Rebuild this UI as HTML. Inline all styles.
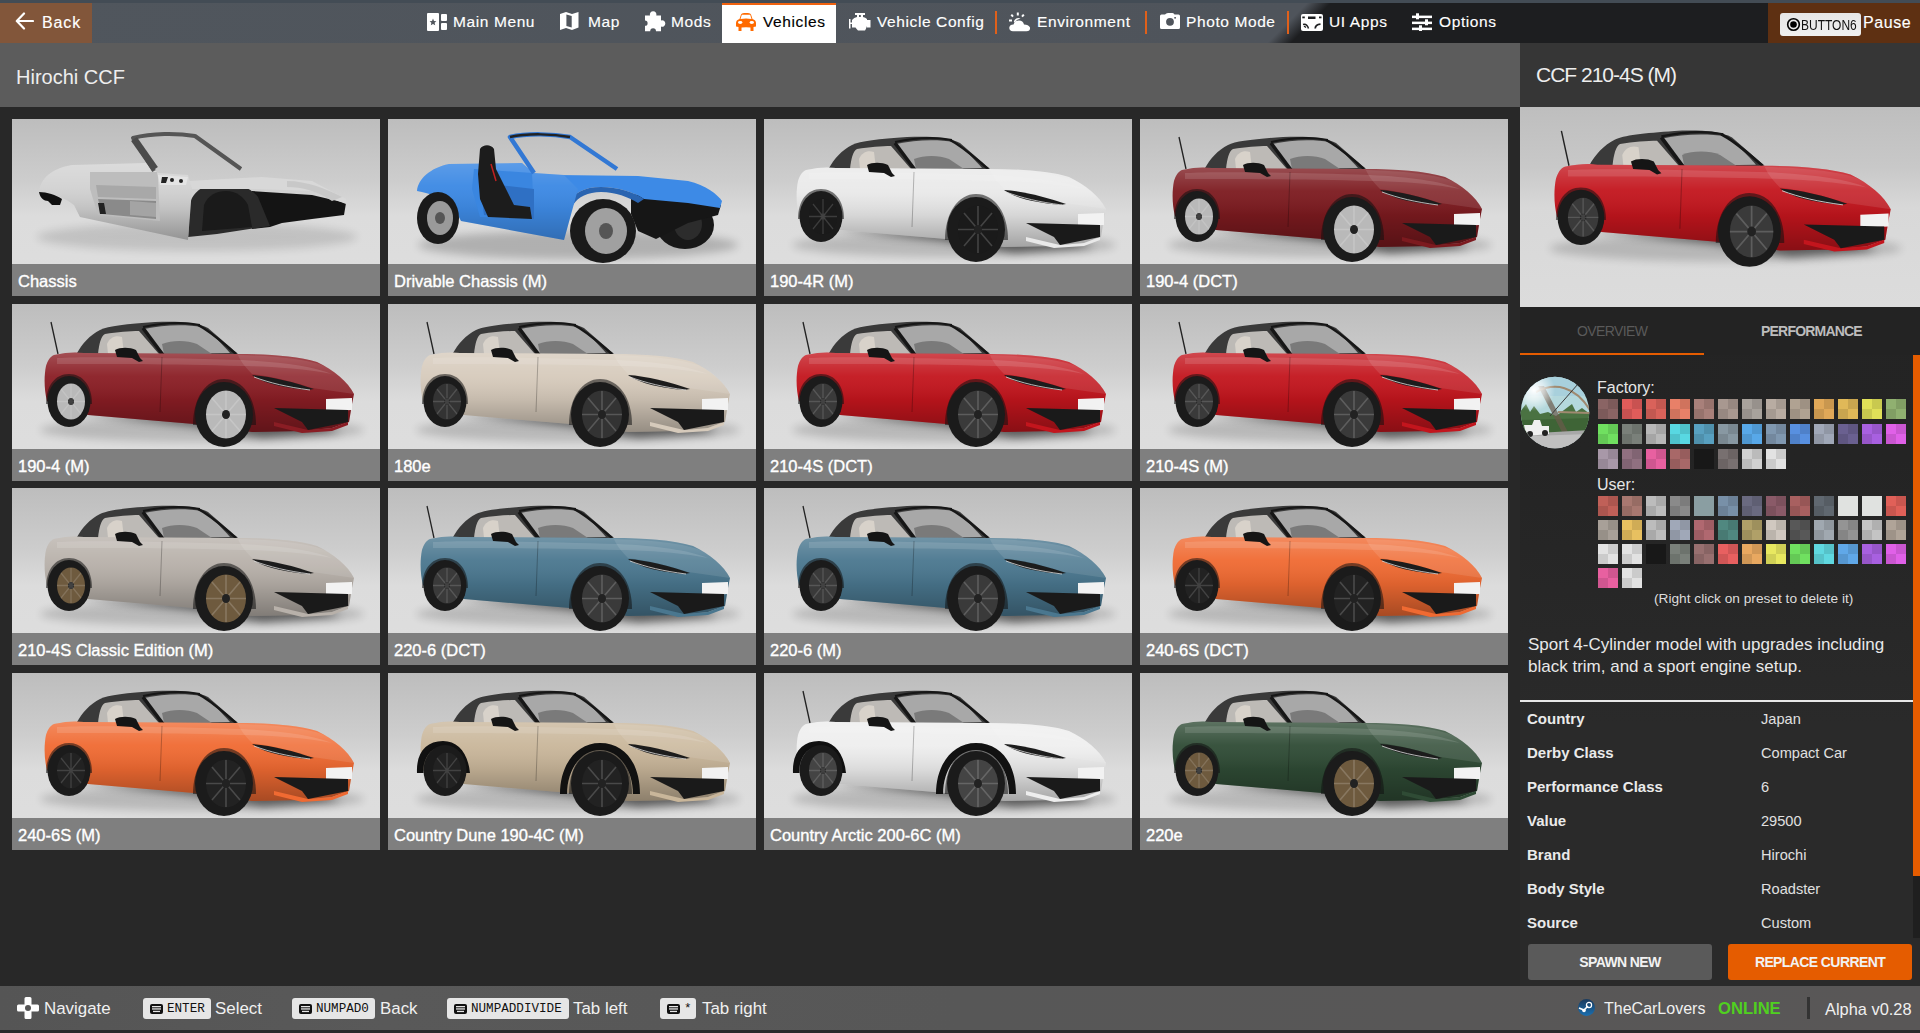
<!DOCTYPE html>
<html><head><meta charset="utf-8">
<style>
*{margin:0;padding:0;box-sizing:border-box}
html,body{width:1920px;height:1033px;overflow:hidden;background:#2a2a2a;font-family:"Liberation Sans",sans-serif;color:#fff}
.a{position:absolute}
#strip{left:0;top:0;width:1920px;height:3px;background:#434c55}
#nav{left:0;top:3px;width:1920px;height:40px;background:linear-gradient(135deg,#50565d 0%,#4f545b 66.7%,#1d1e20 67.9%,#1d1e20 100%)}
#back{left:0;top:3px;width:92px;height:40px;background:#82563a}
.nt{font-size:15.5px;letter-spacing:0.6px;color:#fff;top:13.5px;line-height:16px;white-space:nowrap;-webkit-text-stroke:0.15px currentColor}
.sep{width:2px;height:23px;top:11px;background:#e0601a}
#veh{left:722px;top:3px;width:114px;height:40px;background:#fff;border-top:2px solid #f06210}
#pause{left:1768px;top:3px;width:152px;height:40px;background:#5e3012}
#titleL{left:0;top:43px;width:1520px;height:64px;background:#5c5c5c}
#titleR{left:1520px;top:43px;width:400px;height:64px;background:#363636}
#grid{left:0;top:107px;width:1520px;height:879px;background:#282828}
.card{width:368px;height:177px;overflow:hidden;background:linear-gradient(180deg,#bdbdbd 0%,#cdcdcd 35%,#dcdcdc 55%,#dedede 100%)}
.card svg{position:absolute;left:0;top:0;width:368px;height:145px}
.lbl{position:absolute;left:0;top:145px;width:368px;height:32px;background:rgba(40,40,40,0.52);font-size:16.5px;line-height:35px;padding-left:6px;color:#fff;white-space:nowrap;-webkit-text-stroke:0.35px #fff}
#pimg{left:1520px;top:107px;width:400px;height:200px;overflow:hidden;background:linear-gradient(180deg,#bebebe 0%,#c8c8c8 30%,#d8d8d8 50%,#dcdcdc 100%)}
#panel{left:1520px;top:107px;width:400px;height:879px;background:linear-gradient(180deg,#232323 0%,#242424 40%,#2a2a2a 70%,#2a2a2a 100%)}
#avatar{left:1520px;top:377px;width:70px;height:72px;border-radius:50%;background:radial-gradient(circle at 35% 30%,#f4f4f4 0%,#c8d4d8 18%,#8aa0a0 35%,#5a7058 55%,#8a8a88 72%,#c8c8c8 100%)}
.sw{position:absolute;width:20px;height:20px}
.tl{position:absolute;left:1527px;font-size:15px;font-weight:bold;color:#eaeaea;line-height:20px}
.tv{position:absolute;left:1761px;font-size:14.6px;color:#e0e0e0;line-height:20px}
.btn{top:944px;width:184px;height:36px;border-radius:3px;font-size:14px;letter-spacing:-0.6px;font-weight:bold;color:#f2f2f2;text-align:center;line-height:36px}
#bottom{left:0;top:986px;width:1920px;height:44px;background:linear-gradient(90deg,#555 0%,#595959 20%,#575757 50%,#595757 100%)}
.bt{top:999px;font-size:16.9px;color:#f0f0f0;line-height:20px;white-space:nowrap}
.kb{top:998px;height:21px;background:#e6e6e6;border-radius:3px}
.kb span{position:absolute;top:3px;font-family:"Liberation Mono",monospace;font-size:12.6px;line-height:17px;color:#111}
</style></head><body>
<svg width="0" height="0" style="position:absolute"><defs>
<linearGradient id="bodyshade" x1="0" y1="0" x2="0" y2="1">
 <stop offset="0" stop-color="#fff" stop-opacity="0.22"/>
 <stop offset="0.3" stop-color="#fff" stop-opacity="0.05"/>
 <stop offset="0.6" stop-color="#000" stop-opacity="0.08"/>
 <stop offset="1" stop-color="#000" stop-opacity="0.3"/>
</linearGradient>
<filter id="blur4" x="-20%" y="-50%" width="140%" height="200%"><feGaussianBlur stdDeviation="4"/></filter>
<filter id="blur2"><feGaussianBlur stdDeviation="1.5"/></filter>
</defs>
<symbol id="car" viewBox="0 0 368 145">
 <ellipse cx="190" cy="126" rx="162" ry="12" fill="#000" opacity="0.16" filter="url(#blur4)"/>
 <path d="M60,110 L180,122 L250,134 L330,128 L300,118 L180,112 Z" fill="#000" opacity="0.5" filter="url(#blur4)"/>
 <path d="M39,18 L46,50" stroke="#222" stroke-width="1.3" fill="none" style="display:var(--ant,inline)"/>
 <path d="M65,49 C70,40 78,31 88,26 C96,22 115,20 143,18 C165,17 185,18 196,24 L226,50 L150,53 Z" fill="#3a3a3a"/>
 <path d="M86,50 C87,40 89,32 93,30 C105,28 118,27 127,27 L147,50 Z" fill="#bdbab6"/>
 <path d="M95,40 C98,33 104,31 110,33 L112,50 L96,50 Z" fill="#d8d2ca"/>
 <path d="M132,25 C150,21 172,20 190,23 C201,30 210,40 218,49 L152,50 Z" fill="#a8a8a8"/>
 <path d="M150,40 C160,36 175,36 185,40 L200,50 L152,50 Z" fill="#7a7a7a"/>
 <path d="M131,24 L151,51" stroke="#161616" stroke-width="3.5"/>
 <path d="M186,21 C200,28 212,40 224,50" stroke="#161616" stroke-width="2.5" fill="none"/>
 <path d="M131,23 C150,19 172,18 188,21" stroke="#161616" stroke-width="2" fill="none"/>
 <path d="M42,51 C55,48 65,48 72,49 L225,50 C255,50 285,52 305,58 C322,66 336,78 342,90 L340,100 L337,118 L320,124 L290,127 L240,128 L182,120 L76,111 L48,104 L35,97 C32,85 32,72 34,62 C36,56 38,53 42,51 Z" style="fill:var(--body)"/>
 <path d="M42,51 C55,48 65,48 72,49 L225,50 C255,50 285,52 305,58 C322,66 336,78 342,90 L340,100 L337,118 L320,124 L290,127 L240,128 L182,120 L76,111 L48,104 L35,97 C32,85 32,72 34,62 C36,56 38,53 42,51 Z" fill="url(#bodyshade)"/>
 <path d="M45,54 C80,52 160,54 230,56 C270,58 300,62 320,70 C290,64 250,62 230,62 C160,60 90,60 45,60 Z" fill="#fff" opacity="0.12"/>
 <path d="M226,51 C262,52 292,55 310,61 C326,68 337,80 342,90 L300,84 C282,78 258,72 240,70 C232,62 228,56 226,51 Z" fill="#fff" opacity="0.1"/>
 <path d="M262,118 L296,126 L320,124 L336,118 L336,121 L320,127 L290,129 L262,122 Z" style="fill:var(--body)"/>
 <path d="M150,53 L148,108" stroke="#000" stroke-opacity="0.25" stroke-width="1"/>
 <path d="M103,46 C108,43 118,43 124,46 L128,54 L131,57 L127,58 L120,54 L105,53 Z" fill="#151515"/>
 <path d="M240,71 C258,72 282,78 302,85 L296,86 C275,84 252,80 240,71 Z" fill="#1c1c1c"/>
 <path d="M242,73 C258,79 275,83 298,86" stroke="#ddd" stroke-width="0.8" fill="none"/>
 <path d="M314,95 L340,94 L340,106 L314,107 Z" fill="#f2f2f2"/>
 <path d="M262,104 L336,106 L336,118 L296,126 L290,118 Z" fill="#1a1a1a"/>
 <path d="M29,100 C28,80 38,68 55,68 C70,68 80,80 82,100 L76,100 C74,84 66,74 55,74 C42,74 35,86 35,100 Z" fill="#111" style="display:var(--flare,none)"/>
 <path d="M172,121 C172,92 188,70 212,70 C238,70 252,92 252,121 L245,121 C245,98 232,77 212,77 C192,77 179,98 179,121 Z" fill="#111" style="display:var(--flare,none)"/>
 <path d="M34,100 C34,82 43,70 57,70 C71,70 80,82 80,100 Z" fill="#111" opacity="0.55"/>
 <ellipse cx="57" cy="97.5" rx="21.5" ry="25.5" fill="#1b1b1b"/>
 <ellipse cx="59" cy="97.5" rx="14" ry="18" style="fill:var(--rim)"/>
 <ellipse cx="59" cy="97.5" rx="3" ry="3.5" fill="#222"/>
 <path d="M181,121 C181,94 194,75 212,75 C231,75 244,94 244,121 Z" fill="#111" opacity="0.55"/>
 <ellipse cx="212" cy="110.5" rx="29" ry="32.5" fill="#1b1b1b"/>
 <ellipse cx="214" cy="110.5" rx="20" ry="24" style="fill:var(--rim)"/>
 <path d="M214,87 L214,134 M194,110.5 L234,110.5 M200,94 L228,127 M228,94 L200,127" stroke="#fff" stroke-opacity="0.18" stroke-width="1.6"/>
 <path d="M59,80 L59,115 M45,97.5 L73,97.5 M49,85 L69,110 M69,85 L49,110" stroke="#fff" stroke-opacity="0.15" stroke-width="1.3"/>
 <ellipse cx="214" cy="110.5" rx="4" ry="4.5" fill="#222"/>
</symbol>

<symbol id="chassis" viewBox="0 0 368 145">
 <ellipse cx="185" cy="118" rx="160" ry="14" fill="#000" opacity="0.12" filter="url(#blur4)"/>
 <!-- black front structure -->
 <path d="M240,72 L300,76 L334,84 L332,96 L300,100 L270,104 L258,108 L240,110 Z" fill="#141414"/>
 <path d="M176,118 L178,84 C182,70 196,64 212,64 C228,64 240,70 246,78 L258,107 L205,115 Z" fill="#2a2a2a"/>
 <path d="M190,112 L192,86 C196,76 205,72 214,72 C224,72 232,78 236,86 L240,108 Z" fill="#1a1a1a"/>
 <!-- silver front struts -->
 <path d="M176,62 L250,58 L300,62 L334,80 L334,85 L300,72 L245,70 L180,70 Z" fill="#d8d8d8"/>
 <path d="M275,62 C295,62 315,70 330,78 L320,82 C305,72 290,68 275,68 Z" fill="#c8c8c8"/>
 <!-- rear body silver -->
 <path d="M27,73 C28,60 40,49 60,46 L134,44 L146,54 L176,56 L180,70 L176,121 L68,98 L62,86 C52,78 40,74 27,73 Z" fill="#d2d2d2"/>
 <path d="M27,73 C28,60 40,49 60,46 L134,44 L146,54 L176,56 L180,70 L176,121 L68,98 L62,86 C52,78 40,74 27,73 Z" fill="url(#bodyshade)"/>
 <!-- interior -->
 <path d="M78,53 L145,53 L146,58 L148,102 L86,96 L78,70 Z" fill="#bdbdbd"/>
 <path d="M84,66 L144,68 L144,80 L86,78 Z" fill="#a8a8a8"/>
 <path d="M86,80 L144,82 L144,100 L90,95 Z" fill="#8a8a8a"/>
 <path d="M118,82 L144,84 L144,98 L118,96 Z" fill="#a4a4a4"/>
 <path d="M86,84 L92,84 L94,95 L88,95 Z" fill="#222"/>
 <!-- rear arch -->
 <path d="M27,73 C28,79 32,82 36,82 L40,86 L48,86 L50,80 C44,76 35,73 27,73 Z" fill="#101010"/>
 <!-- pillar block -->
 <path d="M146,56 L176,58 L174,66 L148,66 Z" fill="#e4e4e4"/>
 <circle cx="160" cy="61" r="2" fill="#222"/><circle cx="169" cy="62" r="2" fill="#222"/><path d="M150,58 L156,58 L154,64 L149,64 Z" fill="#222"/>
 <!-- windshield frame -->
 <path d="M142,52 L121,19 C140,14 165,14 183,17 L229,50" stroke="#555" stroke-width="4" fill="none" stroke-linejoin="round"/>
 <path d="M143,50 L122,20" stroke="#4a4a4a" stroke-width="7" fill="none"/>
</symbol>
<symbol id="dchassis" viewBox="0 0 368 145">
 <ellipse cx="190" cy="126" rx="160" ry="14" fill="#000" opacity="0.2" filter="url(#blur4)"/>
 <!-- far front wheel -->
 <ellipse cx="297" cy="106" rx="29" ry="24" fill="#181818"/>
 <ellipse cx="300" cy="105" rx="14" ry="16" fill="#2c2c2c"/>
 <!-- black engine/suspension -->
 <path d="M243,75 L333,86 L330,96 L300,104 L268,120 L250,112 L243,95 Z" fill="#161616"/>
 <!-- blue front arch -->
 <path d="M170,56 L250,57 L300,62 C318,66 330,76 334,82 L332,89 L300,84 L256,80 C246,73 230,68 213,68 C196,68 186,74 181,84 L176,100 Z" fill="#3d8ae6"/>
 <path d="M256,80 C246,73 230,68 213,68 C196,68 186,74 181,84 L185,86 C190,78 200,73 213,73 C228,73 240,78 250,84 Z" fill="#2a64b0"/>
 <!-- rear body blue -->
 <path d="M29,72 C30,60 42,49 61,45 L134,44 L146,54 L176,56 L190,70 L176,121 L73,102 L66,88 C56,80 42,74 29,72 Z" fill="#3e8ae4"/>
 <path d="M29,72 C30,60 42,49 61,45 L134,44 L146,54 L176,56 L190,70 L176,121 L73,102 L66,88 C56,80 42,74 29,72 Z" fill="url(#bodyshade)" opacity="0.7"/>
 <!-- door opening -->
 <path d="M86,50 L144,54 L146,100 L92,98 L84,70 Z" fill="#3a86e0"/>
 <path d="M92,64 L146,70 L146,100 L96,96 Z" fill="#2f70c4"/>
 <!-- seat -->
 <path d="M92,30 C95,25 103,25 106,30 L108,50 L118,70 L126,86 L142,88 L144,100 L100,98 L92,80 L90,55 Z" fill="#1c1c1c"/>
 <path d="M103,45 L108,62" stroke="#c02020" stroke-width="1.5"/>
 <!-- windshield frame -->
 <path d="M146,54 L122,18 C140,14 165,15 182,18 L229,50" stroke="#3278d4" stroke-width="4.5" fill="none" stroke-linejoin="round"/>
 <path d="M122,18 C140,14 165,15 182,18" stroke="#222" stroke-width="2.5" fill="none"/>
 <!-- rear wheel -->
 <ellipse cx="50" cy="99" rx="21" ry="26" fill="#1a1a1a"/>
 <ellipse cx="52" cy="99" rx="13" ry="17" fill="#9a9a9a"/>
 <ellipse cx="52" cy="99" rx="5" ry="6" fill="#555"/>
 <!-- front wheel -->
 <ellipse cx="215" cy="112" rx="33" ry="32" fill="#1a1a1a"/>
 <ellipse cx="218" cy="112" rx="21" ry="23" fill="#a0a0a0"/>
 <ellipse cx="218" cy="112" rx="7" ry="8" fill="#555"/>
</symbol>
</svg>
<div class="a" id="strip"></div>
<div class="a" id="nav"></div>
<div class="a" id="back"></div>
<svg class="a" style="left:15px;top:12px" width="19" height="18" viewBox="0 0 19 18"><path d="M9,1.5 L1.8,9 L9,16.5 M2,9 L18,9" stroke="#fff" stroke-width="2.2" fill="none" stroke-linecap="round" stroke-linejoin="round"/></svg>
<div class="a nt" style="left:42px;font-size:16px;letter-spacing:0.9px;top:15px">Back</div>
<div class="a" id="veh"></div>
<svg class="a" style="left:427px;top:13px" width="20" height="18" viewBox="0 0 20 18"><rect x="0" y="0" width="12" height="18" rx="1" fill="#fff"/><rect x="14" y="1" width="6" height="7" rx="1" fill="#fff"/><rect x="14" y="10" width="6" height="7" rx="1" fill="#fff"/><path d="M6,5.6 L7,8 L9.4,8.2 L7.6,9.8 L8.2,12.2 L6,10.9 L3.8,12.2 L4.4,9.8 L2.6,8.2 L5,8 Z" fill="#50555c"/></svg>
<div class="a nt" style="left:453px">Main Menu</div>
<svg class="a" style="left:560px;top:12px" width="19" height="18" viewBox="0 0 19 18"><path d="M0,2 L6,0 L12,2 L18.5,0 L18.5,15.5 L12,18 L6,16 L0,18 Z" fill="#fff"/><path d="M6.4,2.4 L11.7,4 L11.7,15.5 L6.4,13.9 Z" fill="#50555c"/></svg>
<div class="a nt" style="left:588px">Map</div>
<svg class="a" style="left:645px;top:11px" width="21" height="21" viewBox="0 0 21 21"><path d="M0,4.5 L5,4.5 A3.3,3.3 0 1 1 11.3,4.5 L16,4.5 L16,9.5 A3.2,3.2 0 1 1 16,15.5 L16,20.2 L11,20.2 A2.8,2.8 0 0 0 5.2,20.2 L0,20.2 L0,14.8 A2.6,2.6 0 0 0 0,9.6 Z" fill="#fff"/></svg>
<div class="a nt" style="left:671px">Mods</div>
<svg class="a" style="left:736px;top:13px" width="20" height="18" viewBox="0 0 20 18"><path d="M5,1.5 Q5.5,0 8,0 L12,0 Q14.5,0 15,1.5 L16.5,6 Q20,7 20,10 L20,13.5 L17.5,14 L17.5,18 L14.5,18 L14.5,14.5 Q10,14 5.5,14.5 L5.5,18 L2.5,18 L2.5,14 L0,13.5 L0,10 Q0,7 3.5,6 Z" fill="#ff6a00"/><path d="M5.8,1.8 L14.2,1.8 L15.5,6 Q10,5 4.5,6 Z" fill="#fff"/><ellipse cx="4.2" cy="9.5" rx="2.2" ry="1.4" fill="#fff"/><ellipse cx="15.8" cy="9.5" rx="2.2" ry="1.4" fill="#fff"/></svg>
<div class="a nt" style="left:763px;color:#000">Vehicles</div>
<svg class="a" style="left:849px;top:13px" width="22" height="18" viewBox="0 0 22 18"><path d="M6,0 L16,0 L16,2 L14,2 L14,4 Q16.5,4.5 18,6 L18,7 L21.5,7 L21.5,14.5 L18,14.5 L18,13 Q17,16 16,17.5 L9,17.5 Q7.5,16 6.5,14.5 L3,14.5 L3,11 L1.5,11 L1.5,15.5 L0,15.5 L0,6 L1.5,6 L1.5,9.5 L3,9.5 L3,7 Q5,4.5 8,4 L8,2 L6,2 Z" fill="#fff"/><rect x="10" y="2" width="1.8" height="2" fill="#50555c"/></svg>
<div class="a nt" style="left:877px">Vehicle Config</div>
<div class="a sep" style="left:995px"></div>
<svg class="a" style="left:1009px;top:12px" width="22" height="20" viewBox="0 0 22 20"><rect x="7.8" y="0.5" width="2" height="3" fill="#fff"/><path d="M2.3,2.7 L4,4.6" stroke="#fff" stroke-width="2"/><path d="M14.8,2.6 L13,4.7" stroke="#fff" stroke-width="2"/><rect x="0" y="7.5" width="3" height="2" fill="#fff"/><path d="M4.8,10 A4.4,4.4 0 0 1 11.5,6.7 Q7,7.5 6,10.5 Z" fill="#fff"/><path d="M4,19.2 Q0,19 0.3,15.5 Q0.8,12.5 4.6,12.6 Q5.5,8.5 10,8.5 Q14,8.6 15,12.5 Q19.5,12.6 21,15.5 Q21.5,19.2 17.5,19.2 Z" fill="#fff"/></svg>
<div class="a nt" style="left:1037px">Environment</div>
<div class="a sep" style="left:1145px"></div>
<svg class="a" style="left:1160px;top:13px" width="20" height="16" viewBox="0 0 20 16"><path d="M5,1.5 Q6,0 8,0 L12.5,0 Q14,0 14.5,1.5 L18.5,1.5 Q20,1.5 20,3 L20,14.5 Q20,16 18.5,16 L1.5,16 Q0,16 0,14.5 L0,3 Q0,1.5 1.5,1.5 Z" fill="#fff"/><circle cx="10" cy="8.8" r="3.9" fill="#50555c"/><rect x="14.3" y="4" width="1.6" height="1.6" fill="#50555c"/></svg>
<div class="a nt" style="left:1186px">Photo Mode</div>
<div class="a sep" style="left:1287px"></div>
<svg class="a" style="left:1301px;top:14px" width="22" height="17" viewBox="0 0 22 17"><rect x="0" y="0" width="22" height="17" rx="2" fill="#fff"/><rect x="1.3" y="2.5" width="2.5" height="1.8" fill="#1d1e20"/><rect x="7" y="2.5" width="7.5" height="2.5" fill="#1d1e20"/><rect x="18" y="2.5" width="2.5" height="1.8" fill="#1d1e20"/><path d="M2,10.5 Q6,9.5 7.5,14.5" stroke="#1d1e20" stroke-width="1.5" fill="none"/><path d="M3,12 L5,13.5" stroke="#1d1e20" stroke-width="1.3"/><path d="M14.2,14.5 Q14.5,10.5 19.5,10.2" stroke="#1d1e20" stroke-width="1.8" fill="none"/></svg>
<div class="a nt" style="left:1329px">UI Apps</div>
<svg class="a" style="left:1412px;top:13px" width="20" height="18" viewBox="0 0 20 18"><rect x="0" y="2.6" width="20" height="2.5" fill="#fff"/><rect x="0" y="8.6" width="20" height="2.5" fill="#fff"/><rect x="0" y="14.6" width="20" height="2.5" fill="#fff"/><rect x="4" y="0.3" width="3" height="6" fill="#fff"/><rect x="13" y="6.3" width="3" height="6" fill="#fff"/><rect x="7" y="12.3" width="3" height="5.7" fill="#fff"/></svg>
<div class="a nt" style="left:1439px">Options</div>
<div class="a" id="pause"></div>
<div class="a" style="left:1780px;top:13px;width:81px;height:23px;border-radius:3px;background:linear-gradient(180deg,#e6e6e6,#f0f0f0)"></div>
<svg class="a" style="left:1786px;top:17px" width="15" height="15" viewBox="0 0 15 15"><circle cx="7.5" cy="7.5" r="5.8" fill="none" stroke="#000" stroke-width="1.6"/><circle cx="7.5" cy="7.5" r="3.3" fill="#000"/></svg>
<div class="a" style="left:1801px;top:18px;font-size:12px;line-height:14px;color:#111;transform:scaleY(1.15);transform-origin:0 50%">BUTTON6</div>
<div class="a nt" style="left:1863px;font-size:16px;letter-spacing:0.6px;top:15px">Pause</div>

<div class="a" id="titleL"></div>
<div class="a" style="left:16px;top:65.5px;font-size:20px;line-height:23px;color:#eee">Hirochi CCF</div>
<div class="a" id="titleR"></div>
<div class="a" style="left:1536px;top:63px;font-size:21px;letter-spacing:-1px;line-height:24px;color:#eee">CCF 210-4S (M)</div>

<div class="a" id="grid"></div>
<div class="a card" style="left:12px;top:119px"><svg viewBox="0 0 368 145"><use href="#chassis"/></svg><div class="lbl">Chassis</div></div>
<div class="a card" style="left:388px;top:119px"><svg viewBox="0 0 368 145"><use href="#dchassis"/></svg><div class="lbl">Drivable Chassis (M)</div></div>
<div class="a card" style="left:764px;top:119px;--body:#e9e9e9;--rim:#1a1a1a;--ant:none"><svg viewBox="0 0 368 145"><use href="#car"/></svg><div class="lbl">190-4R (M)</div></div>
<div class="a card" style="left:1140px;top:119px;--body:#7c1a1f;--rim:#b9b9b9"><svg viewBox="0 0 368 145"><use href="#car"/></svg><div class="lbl">190-4 (DCT)</div></div>
<div class="a card" style="left:12px;top:304px;--body:#8a1d24;--rim:#b9b9b9"><svg viewBox="0 0 368 145"><use href="#car"/></svg><div class="lbl">190-4 (M)</div></div>
<div class="a card" style="left:388px;top:304px;--body:#d6cabb;--rim:#333"><svg viewBox="0 0 368 145"><use href="#car"/></svg><div class="lbl">180e</div></div>
<div class="a card" style="left:764px;top:304px;--body:#c3151d;--rim:#3a3a3a"><svg viewBox="0 0 368 145"><use href="#car"/></svg><div class="lbl">210-4S (DCT)</div></div>
<div class="a card" style="left:1140px;top:304px;--body:#c3151d;--rim:#3a3a3a"><svg viewBox="0 0 368 145"><use href="#car"/></svg><div class="lbl">210-4S (M)</div></div>
<div class="a card" style="left:12px;top:488px;--body:#b8b1aa;--rim:#6e5a3e;--ant:none"><svg viewBox="0 0 368 145"><use href="#car"/></svg><div class="lbl">210-4S Classic Edition (M)</div></div>
<div class="a card" style="left:388px;top:488px;--body:#4a778f;--rim:#3a3a3a"><svg viewBox="0 0 368 145"><use href="#car"/></svg><div class="lbl">220-6 (DCT)</div></div>
<div class="a card" style="left:764px;top:488px;--body:#4a778f;--rim:#3a3a3a"><svg viewBox="0 0 368 145"><use href="#car"/></svg><div class="lbl">220-6 (M)</div></div>
<div class="a card" style="left:1140px;top:488px;--body:#f06a32;--rim:#222;--ant:none"><svg viewBox="0 0 368 145"><use href="#car"/></svg><div class="lbl">240-6S (DCT)</div></div>
<div class="a card" style="left:12px;top:673px;--body:#f06a32;--rim:#222;--ant:none"><svg viewBox="0 0 368 145"><use href="#car"/></svg><div class="lbl">240-6S (M)</div></div>
<div class="a card" style="left:388px;top:673px;--body:#c9b69a;--rim:#222;--ant:none;--flare:inline"><svg viewBox="0 0 368 145"><use href="#car"/></svg><div class="lbl">Country Dune 190-4C (M)</div></div>
<div class="a card" style="left:764px;top:673px;--body:#eeeeee;--rim:#444;--flare:inline"><svg viewBox="0 0 368 145"><use href="#car"/></svg><div class="lbl">Country Arctic 200-6C (M)</div></div>
<div class="a card" style="left:1140px;top:673px;--body:#2f4b35;--rim:#6e5a3e;--ant:none"><svg viewBox="0 0 368 145"><use href="#car"/></svg><div class="lbl">220e</div></div>

<div class="a" id="panel"></div>
<div class="a" id="pimg"><svg width="400" height="200" viewBox="0 0 400 200"><use href="#car" x="0" y="0" width="368" height="145" transform="translate(-1,4.4) scale(1.087)" style="--body:#c3151d;--rim:#3a3a3a"/></svg></div>
<div class="a" style="left:1520px;top:307px;width:400px;height:48px;background:#232323"></div>
<div class="a" style="left:1577px;top:323px;font-size:14px;letter-spacing:-0.6px;color:#5a5a5a;line-height:17px">OVERVIEW</div>
<div class="a" style="left:1761px;top:323px;font-size:14px;letter-spacing:-0.8px;font-weight:bold;color:#bdbdbd;line-height:17px">PERFORMANCE</div>
<div class="a" style="left:1520px;top:353px;width:184px;height:2px;background:#e55c00"></div>
<div class="a" style="left:1913px;top:355px;width:7px;height:583px;background:#1f1f1f"></div>
<div class="a" style="left:1913px;top:355px;width:7px;height:521px;background:#e55c00"></div>
<svg class="a" style="left:1520px;top:376px" width="70" height="73" viewBox="0 0 70 73"><defs><clipPath id="avc"><ellipse cx="35" cy="36.5" rx="34.3" ry="35.8"/></clipPath><radialGradient id="sun" cx="0.3" cy="0.3" r="0.35"><stop offset="0" stop-color="#fff" stop-opacity="1"/><stop offset="0.5" stop-color="#fff" stop-opacity="0.6"/><stop offset="1" stop-color="#fff" stop-opacity="0"/></radialGradient></defs><g clip-path="url(#avc)"><rect x="0" y="0" width="70" height="73" fill="#b4d8dc"/><rect x="0" y="0" width="70" height="20" fill="#a8d0dc"/><path d="M0,36 L6,28 L10,36 L14,30 L20,38 L28,36 L36,40 L44,34 L52,28 L56,36 L62,32 L70,38 L70,60 L0,60 Z" fill="#4a7242"/><path d="M0,44 L70,42 L70,60 L0,60 Z" fill="#3e6436"/><path d="M18,10 L24,10 L50,60 L44,60 Z" fill="#6a5a4a" opacity="0.7"/><path d="M16,16 C35,6 55,10 70,34" stroke="#a08a70" stroke-width="2" fill="none"/><path d="M38,36 L70,37" stroke="#a08a70" stroke-width="2"/><path d="M30,40 L58,8" stroke="#3a3a3a" stroke-width="1"/><path d="M0,58 L70,54 L70,73 L0,73 Z" fill="#a8a8a8"/><path d="M10,60 L70,58 L70,73 L10,73 Z" fill="#c0c0c0"/><path d="M4,49 L12,49 L14,44 L20,44 L22,50 L29,50 L29,58 L6,60 Z" fill="#f0f0f0"/><circle cx="10" cy="58" r="3" fill="#222"/><circle cx="25" cy="57" r="3" fill="#222"/><circle cx="26" cy="26" r="30" fill="url(#sun)"/></g></svg>
<div class="a" style="left:1597px;top:377.5px;font-size:16px;color:#e6e6e6;line-height:20px">Factory:</div>
<div class="a" style="left:1597px;top:474.5px;font-size:16px;color:#e6e6e6;line-height:20px">User:</div>
<div class="sw" style="left:1598px;top:399px;background:conic-gradient(#7c5a5a 0 25%,#8a6464 0 50%,#7c5a5a 0 75%,#8a6464 0)"></div>
<div class="sw" style="left:1622px;top:399px;background:conic-gradient(#c95251 0 25%,#e05c5a 0 50%,#c95251 0 75%,#e05c5a 0)"></div>
<div class="sw" style="left:1646px;top:399px;background:conic-gradient(#c35851 0 25%,#d9625a 0 50%,#c35851 0 75%,#d9625a 0)"></div>
<div class="sw" style="left:1670px;top:399px;background:conic-gradient(#d0735d 0 25%,#e88068 0 50%,#d0735d 0 75%,#e88068 0)"></div>
<div class="sw" style="left:1694px;top:399px;background:conic-gradient(#97736d 0 25%,#a8807a 0 50%,#97736d 0 75%,#a8807a 0)"></div>
<div class="sw" style="left:1718px;top:399px;background:conic-gradient(#978881 0 25%,#a89890 0 50%,#978881 0 75%,#a89890 0)"></div>
<div class="sw" style="left:1742px;top:399px;background:conic-gradient(#97918c 0 25%,#a8a29c 0 50%,#97918c 0 75%,#a8a29c 0)"></div>
<div class="sw" style="left:1766px;top:399px;background:conic-gradient(#a59a91 0 25%,#b8aca2 0 50%,#a59a91 0 75%,#b8aca2 0)"></div>
<div class="sw" style="left:1790px;top:399px;background:conic-gradient(#9e9183 0 25%,#b0a292 0 50%,#9e9183 0 75%,#b0a292 0)"></div>
<div class="sw" style="left:1814px;top:399px;background:conic-gradient(#c9974f 0 25%,#e0a858 0 50%,#c9974f 0 75%,#e0a858 0)"></div>
<div class="sw" style="left:1838px;top:399px;background:conic-gradient(#c9a54f 0 25%,#e0b858 0 50%,#c9a54f 0 75%,#e0b858 0)"></div>
<div class="sw" style="left:1862px;top:399px;background:conic-gradient(#c9c94f 0 25%,#e0e058 0 50%,#c9c94f 0 75%,#e0e058 0)"></div>
<div class="sw" style="left:1886px;top:399px;background:conic-gradient(#819e64 0 25%,#90b070 0 50%,#819e64 0 75%,#90b070 0)"></div>
<div class="sw" style="left:1598px;top:424px;background:conic-gradient(#64c956 0 25%,#70e060 0 50%,#64c956 0 75%,#70e060 0)"></div>
<div class="sw" style="left:1622px;top:424px;background:conic-gradient(#6d736d 0 25%,#7a807a 0 50%,#6d736d 0 75%,#7a807a 0)"></div>
<div class="sw" style="left:1646px;top:424px;background:conic-gradient(#a5a5a5 0 25%,#b8b8b8 0 50%,#a5a5a5 0 75%,#b8b8b8 0)"></div>
<div class="sw" style="left:1670px;top:424px;background:conic-gradient(#4fc2cb 0 25%,#58d8e2 0 50%,#4fc2cb 0 75%,#58d8e2 0)"></div>
<div class="sw" style="left:1694px;top:424px;background:conic-gradient(#4f90ac 0 25%,#58a0c0 0 50%,#4f90ac 0 75%,#58a0c0 0)"></div>
<div class="sw" style="left:1718px;top:424px;background:conic-gradient(#7a8891 0 25%,#8898a2 0 50%,#7a8891 0 75%,#8898a2 0)"></div>
<div class="sw" style="left:1742px;top:424px;background:conic-gradient(#4f97d0 0 25%,#58a8e8 0 50%,#4f97d0 0 75%,#58a8e8 0)"></div>
<div class="sw" style="left:1766px;top:424px;background:conic-gradient(#73889e 0 25%,#8098b0 0 50%,#73889e 0 75%,#8098b0 0)"></div>
<div class="sw" style="left:1790px;top:424px;background:conic-gradient(#4f81c9 0 25%,#5890e0 0 50%,#4f81c9 0 75%,#5890e0 0)"></div>
<div class="sw" style="left:1814px;top:424px;background:conic-gradient(#9097a5 0 25%,#a0a8b8 0 50%,#9097a5 0 75%,#a0a8b8 0)"></div>
<div class="sw" style="left:1838px;top:424px;background:conic-gradient(#5f5681 0 25%,#6a6090 0 50%,#5f5681 0 75%,#6a6090 0)"></div>
<div class="sw" style="left:1862px;top:424px;background:conic-gradient(#9756c9 0 25%,#a860e0 0 50%,#9756c9 0 75%,#a860e0 0)"></div>
<div class="sw" style="left:1886px;top:424px;background:conic-gradient(#c956d0 0 25%,#e060e8 0 50%,#c956d0 0 75%,#e060e8 0)"></div>
<div class="sw" style="left:1598px;top:449px;background:conic-gradient(#978897 0 25%,#a898a8 0 50%,#978897 0 75%,#a898a8 0)"></div>
<div class="sw" style="left:1622px;top:449px;background:conic-gradient(#816473 0 25%,#907080 0 50%,#816473 0 75%,#907080 0)"></div>
<div class="sw" style="left:1646px;top:449px;background:conic-gradient(#d05690 0 25%,#e860a0 0 50%,#d05690 0 75%,#e860a0 0)"></div>
<div class="sw" style="left:1670px;top:449px;background:conic-gradient(#975d5d 0 25%,#a86868 0 50%,#975d5d 0 75%,#a86868 0)"></div>
<div class="sw" style="left:1694px;top:449px;background:#181818"></div>
<div class="sw" style="left:1718px;top:449px;background:conic-gradient(#6c6464 0 25%,#787070 0 50%,#6c6464 0 75%,#787070 0)"></div>
<div class="sw" style="left:1742px;top:449px;background:conic-gradient(#bbbbbb 0 25%,#d0d0d0 0 50%,#bbbbbb 0 75%,#d0d0d0 0)"></div>
<div class="sw" style="left:1766px;top:449px;background:conic-gradient(#cbcbcb 0 25%,#e2e2e2 0 50%,#cbcbcb 0 75%,#e2e2e2 0)"></div>
<div class="sw" style="left:1598px;top:496px;background:conic-gradient(#ac564f 0 25%,#c06058 0 50%,#ac564f 0 75%,#c06058 0)"></div>
<div class="sw" style="left:1622px;top:496px;background:conic-gradient(#976c64 0 25%,#a87870 0 50%,#976c64 0 75%,#a87870 0)"></div>
<div class="sw" style="left:1646px;top:496px;background:conic-gradient(#a9a9a9 0 25%,#bcbcbc 0 50%,#a9a9a9 0 75%,#bcbcbc 0)"></div>
<div class="sw" style="left:1670px;top:496px;background:conic-gradient(#7c7c7c 0 25%,#8a8a8a 0 50%,#7c7c7c 0 75%,#8a8a8a 0)"></div>
<div class="sw" style="left:1694px;top:496px;background:#8a9ea2"></div>
<div class="sw" style="left:1718px;top:496px;background:conic-gradient(#6c8197 0 25%,#7890a8 0 50%,#6c8197 0 75%,#7890a8 0)"></div>
<div class="sw" style="left:1742px;top:496px;background:conic-gradient(#5f5f73 0 25%,#6a6a80 0 50%,#5f5f73 0 75%,#6a6a80 0)"></div>
<div class="sw" style="left:1766px;top:496px;background:conic-gradient(#7c515d 0 25%,#8a5a68 0 50%,#7c515d 0 75%,#8a5a68 0)"></div>
<div class="sw" style="left:1790px;top:496px;background:conic-gradient(#975656 0 25%,#a86060 0 50%,#975656 0 75%,#a86060 0)"></div>
<div class="sw" style="left:1814px;top:496px;background:conic-gradient(#565d64 0 25%,#606870 0 50%,#565d64 0 75%,#606870 0)"></div>
<div class="sw" style="left:1838px;top:496px;background:#e0e2e0"></div>
<div class="sw" style="left:1862px;top:496px;background:#e0e2e0"></div>
<div class="sw" style="left:1886px;top:496px;background:conic-gradient(#c9564f 0 25%,#e06058 0 50%,#c9564f 0 75%,#e06058 0)"></div>
<div class="sw" style="left:1598px;top:520px;background:conic-gradient(#979088 0 25%,#a8a098 0 50%,#979088 0 75%,#a8a098 0)"></div>
<div class="sw" style="left:1622px;top:520px;background:conic-gradient(#d0ac56 0 25%,#e8c060 0 50%,#d0ac56 0 75%,#e8c060 0)"></div>
<div class="sw" style="left:1646px;top:520px;background:conic-gradient(#a9a9a9 0 25%,#bcbcbc 0 50%,#a9a9a9 0 75%,#bcbcbc 0)"></div>
<div class="sw" style="left:1670px;top:520px;background:conic-gradient(#9097a5 0 25%,#a0a8b8 0 50%,#9097a5 0 75%,#a0a8b8 0)"></div>
<div class="sw" style="left:1694px;top:520px;background:conic-gradient(#9e5d64 0 25%,#b06870 0 50%,#9e5d64 0 75%,#b06870 0)"></div>
<div class="sw" style="left:1718px;top:520px;background:conic-gradient(#487a73 0 25%,#508880 0 50%,#487a73 0 75%,#508880 0)"></div>
<div class="sw" style="left:1742px;top:520px;background:conic-gradient(#9e905d 0 25%,#b0a068 0 50%,#9e905d 0 75%,#b0a068 0)"></div>
<div class="sw" style="left:1766px;top:520px;background:conic-gradient(#bbb4ac 0 25%,#d0c8c0 0 50%,#bbb4ac 0 75%,#d0c8c0 0)"></div>
<div class="sw" style="left:1790px;top:520px;background:conic-gradient(#4f4f4f 0 25%,#585858 0 50%,#4f4f4f 0 75%,#585858 0)"></div>
<div class="sw" style="left:1814px;top:520px;background:conic-gradient(#90979e 0 25%,#a0a8b0 0 50%,#90979e 0 75%,#a0a8b0 0)"></div>
<div class="sw" style="left:1838px;top:520px;background:conic-gradient(#858585 0 25%,#949494 0 50%,#858585 0 75%,#949494 0)"></div>
<div class="sw" style="left:1862px;top:520px;background:conic-gradient(#b0b0b0 0 25%,#c4c4c4 0 50%,#b0b0b0 0 75%,#c4c4c4 0)"></div>
<div class="sw" style="left:1886px;top:520px;background:conic-gradient(#9e9388 0 25%,#b0a498 0 50%,#9e9388 0 75%,#b0a498 0)"></div>
<div class="sw" style="left:1598px;top:544px;background:conic-gradient(#cbcbcb 0 25%,#e2e2e2 0 50%,#cbcbcb 0 75%,#e2e2e2 0)"></div>
<div class="sw" style="left:1622px;top:544px;background:conic-gradient(#cbcbcb 0 25%,#e2e2e2 0 50%,#cbcbcb 0 75%,#e2e2e2 0)"></div>
<div class="sw" style="left:1646px;top:544px;background:#181818"></div>
<div class="sw" style="left:1670px;top:544px;background:conic-gradient(#6d736d 0 25%,#7a807a 0 50%,#6d736d 0 75%,#7a807a 0)"></div>
<div class="sw" style="left:1694px;top:544px;background:conic-gradient(#886464 0 25%,#987070 0 50%,#886464 0 75%,#987070 0)"></div>
<div class="sw" style="left:1718px;top:544px;background:conic-gradient(#d05656 0 25%,#e86060 0 50%,#d05656 0 75%,#e86060 0)"></div>
<div class="sw" style="left:1742px;top:544px;background:conic-gradient(#d09756 0 25%,#e8a860 0 50%,#d09756 0 75%,#e8a860 0)"></div>
<div class="sw" style="left:1766px;top:544px;background:conic-gradient(#d0d056 0 25%,#e8e860 0 50%,#d0d056 0 75%,#e8e860 0)"></div>
<div class="sw" style="left:1790px;top:544px;background:conic-gradient(#64c956 0 25%,#70e060 0 50%,#64c956 0 75%,#70e060 0)"></div>
<div class="sw" style="left:1814px;top:544px;background:conic-gradient(#56c2c9 0 25%,#60d8e0 0 50%,#56c2c9 0 75%,#60d8e0 0)"></div>
<div class="sw" style="left:1838px;top:544px;background:conic-gradient(#5697d0 0 25%,#60a8e8 0 50%,#5697d0 0 75%,#60a8e8 0)"></div>
<div class="sw" style="left:1862px;top:544px;background:conic-gradient(#9756c9 0 25%,#a860e0 0 50%,#9756c9 0 75%,#a860e0 0)"></div>
<div class="sw" style="left:1886px;top:544px;background:conic-gradient(#c956d0 0 25%,#e060e8 0 50%,#c956d0 0 75%,#e060e8 0)"></div>
<div class="sw" style="left:1598px;top:568px;background:conic-gradient(#d05690 0 25%,#e860a0 0 50%,#d05690 0 75%,#e860a0 0)"></div>
<div class="sw" style="left:1622px;top:568px;background:conic-gradient(#cbcbcb 0 25%,#e2e2e2 0 50%,#cbcbcb 0 75%,#e2e2e2 0)"></div>
<div class="a" style="left:1654px;top:591px;font-size:13.7px;color:#ddd;line-height:16px">(Right click on preset to delete it)</div>
<div class="a" style="left:1528px;top:633.5px;font-size:17px;color:#e8e8e8;line-height:22px;width:380px">Sport 4-Cylinder model with upgrades including<br>black trim, and a sport engine setup.</div>
<div class="a" style="left:1520px;top:700px;width:393px;height:2px;background:#e8e8e8"></div>
<div class="tl" style="top:709px">Country</div><div class="tv" style="top:709px">Japan</div>
<div class="tl" style="top:743px">Derby Class</div><div class="tv" style="top:743px">Compact Car</div>
<div class="tl" style="top:777px">Performance Class</div><div class="tv" style="top:777px">6</div>
<div class="tl" style="top:811px">Value</div><div class="tv" style="top:811px">29500</div>
<div class="tl" style="top:845px">Brand</div><div class="tv" style="top:845px">Hirochi</div>
<div class="tl" style="top:879px">Body Style</div><div class="tv" style="top:879px">Roadster</div>
<div class="tl" style="top:913px">Source</div><div class="tv" style="top:913px">Custom</div>
<div class="a btn" style="left:1528px;background:#5a5a5a">SPAWN NEW</div>
<div class="a btn" style="left:1728px;background:#e55c00">REPLACE CURRENT</div>


<div class="a" id="bottom"></div>
<svg class="a" style="left:17px;top:997px" width="22" height="22" viewBox="0 0 22 22"><path d="M7.5,1.5 Q7.5,0 9,0 L13,0 Q14.5,0 14.5,1.5 L14.5,7.5 L20.5,7.5 Q22,7.5 22,9 L22,13 Q22,14.5 20.5,14.5 L14.5,14.5 L14.5,20.5 Q14.5,22 13,22 L9,22 Q7.5,22 7.5,20.5 L7.5,14.5 L1.5,14.5 Q0,14.5 0,13 L0,9 Q0,7.5 1.5,7.5 L7.5,7.5 Z" fill="#fff"/><circle cx="11" cy="11" r="3" fill="#555"/></svg>
<div class="a bt" style="left:44px">Navigate</div>
<div class="a kb" style="left:143px;width:68px"><svg width="13" height="10" viewBox="0 0 13 10" style="position:absolute;left:7px;top:6px"><rect x="0" y="0" width="13" height="10" rx="2" fill="#111"/><rect x="2" y="2" width="9" height="1.3" fill="#e6e6e6"/><rect x="2" y="4.3" width="9" height="1.3" fill="#e6e6e6"/><rect x="3" y="6.8" width="7" height="1.3" fill="#e6e6e6"/></svg><span style="left:24px">ENTER</span></div>
<div class="a bt" style="left:215px">Select</div>
<div class="a kb" style="left:292px;width:83px"><svg width="13" height="10" viewBox="0 0 13 10" style="position:absolute;left:7px;top:6px"><rect x="0" y="0" width="13" height="10" rx="2" fill="#111"/><rect x="2" y="2" width="9" height="1.3" fill="#e6e6e6"/><rect x="2" y="4.3" width="9" height="1.3" fill="#e6e6e6"/><rect x="3" y="6.8" width="7" height="1.3" fill="#e6e6e6"/></svg><span style="left:24px">NUMPAD0</span></div>
<div class="a bt" style="left:380px">Back</div>
<div class="a kb" style="left:447px;width:122px"><svg width="13" height="10" viewBox="0 0 13 10" style="position:absolute;left:7px;top:6px"><rect x="0" y="0" width="13" height="10" rx="2" fill="#111"/><rect x="2" y="2" width="9" height="1.3" fill="#e6e6e6"/><rect x="2" y="4.3" width="9" height="1.3" fill="#e6e6e6"/><rect x="3" y="6.8" width="7" height="1.3" fill="#e6e6e6"/></svg><span style="left:24px">NUMPADDIVIDE</span></div>
<div class="a bt" style="left:573px">Tab left</div>
<div class="a kb" style="left:660px;width:36px"><svg width="13" height="10" viewBox="0 0 13 10" style="position:absolute;left:7px;top:6px"><rect x="0" y="0" width="13" height="10" rx="2" fill="#111"/><rect x="2" y="2" width="9" height="1.3" fill="#e6e6e6"/><rect x="2" y="4.3" width="9" height="1.3" fill="#e6e6e6"/><rect x="3" y="6.8" width="7" height="1.3" fill="#e6e6e6"/></svg><span style="left:24px">*</span></div>
<div class="a bt" style="left:702px">Tab right</div>
<svg class="a" style="left:1578px;top:999px" width="17" height="17" viewBox="0 0 17 17"><defs><linearGradient id="stg" x1="0" y1="0" x2="0" y2="1"><stop offset="0" stop-color="#1b3a5c"/><stop offset="1" stop-color="#1a6fb0"/></linearGradient></defs><circle cx="8.5" cy="8.5" r="8.5" fill="url(#stg)"/><circle cx="11" cy="6" r="2.6" fill="none" stroke="#fff" stroke-width="1.2"/><path d="M1,9 L6,11 L10,7" stroke="#fff" stroke-width="1.6" fill="none"/><circle cx="6" cy="11.5" r="1.8" fill="#fff"/></svg>
<div class="a bt" style="left:1604px;font-size:16px">TheCarLovers</div>
<div class="a bt" style="left:1718px;font-size:16.6px;font-weight:bold;color:#50d020">ONLINE</div>
<div class="a" style="left:1807px;top:997px;width:3px;height:22px;background:#333"></div>
<div class="a bt" style="left:1825px;font-size:16.4px">Alpha v0.28</div>

</body></html>
